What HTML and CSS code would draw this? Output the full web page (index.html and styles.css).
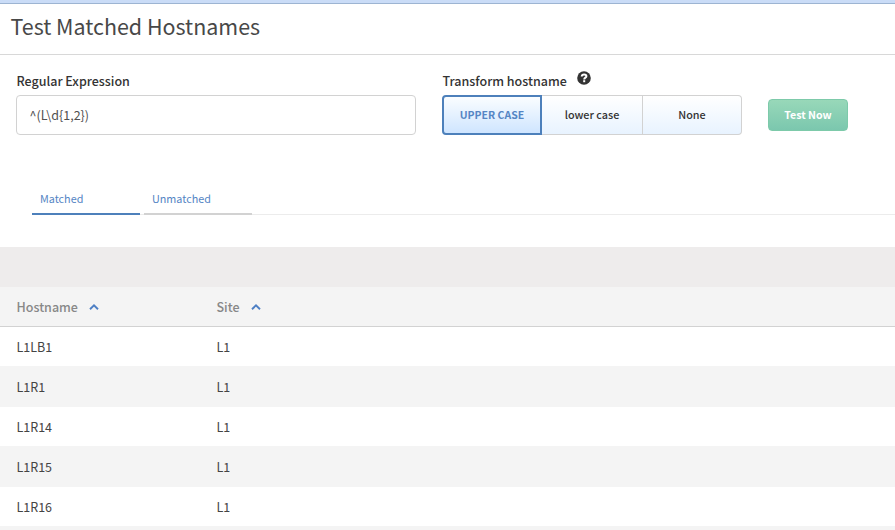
FILE: index.html
```html
<!DOCTYPE html>
<html lang="en">
<head>
<meta charset="utf-8">
<title>Test Matched Hostnames</title>
<link rel="stylesheet" href="styles.css">
</head>
<body>
<header class="title-bar"><h1>Test Matched Hostnames</h1></header>
<section class="form">
  <div class="field regex">
    <div class="label"><label for="regex">Regular Expression</label></div>
    <input id="regex" class="input" type="text" value="^(L\d{1,2})">
  </div>
  <div class="field transform">
    <div class="label"><span>Transform hostname</span>
      <svg class="help" viewBox="0 0 14 14"><circle cx="7" cy="7" r="6.8" fill="#333"/><path d="M4.7 5.5C4.8 4.1 5.7 3.4 7.1 3.4c1.3 0 2.3.7 2.3 1.8C9.4 6.7 7.2 6.6 7.2 8.4" fill="none" stroke="#fff" stroke-width="2"/><rect x="6.2" y="9.2" width="2" height="2" fill="#fff"/></svg>
    </div>
    <div class="segments">
      <button class="segment selected">UPPER CASE</button>
      <button class="segment">lower case</button>
      <button class="segment">None</button>
    </div>
  </div>
  <button class="test">Test Now</button>
</section>
<nav class="tabs">
  <a class="tab active">Matched</a>
  <a class="tab">Unmatched</a>
</nav>
<div class="toolbar"></div>
<div class="table">
  <div class="row head">
    <div class="cell"><span>Hostname</span><svg class="caret" viewBox="0 0 10 6"><path d="M1 5.2L5 1.4L9 5.2"/></svg></div>
    <div class="cell"><span>Site</span><svg class="caret" viewBox="0 0 10 6"><path d="M1 5.2L5 1.4L9 5.2"/></svg></div>
  </div>
  <div class="row"><div class="cell">L1LB1</div><div class="cell">L1</div></div>
  <div class="row shaded"><div class="cell">L1R1</div><div class="cell">L1</div></div>
  <div class="row"><div class="cell">L1R14</div><div class="cell">L1</div></div>
  <div class="row shaded"><div class="cell">L1R15</div><div class="cell">L1</div></div>
  <div class="row"><div class="cell">L1R16</div><div class="cell">L1</div></div>
  <div class="row shaded last"></div>
</div>
</body>
</html>
```

FILE: styles.css
```css
* { box-sizing: border-box; }
body {
  margin: 0;
  background: #fff;
  color: #444;
  font-family: "Noto Sans CJK SC", "Noto Sans", sans-serif;
  font-size: 12.5px;
}
button, input { font-family: inherit; margin: 0; }
.title-bar {
  height: 55px;
  border-top: 3px solid #cadcf7;
  border-bottom: 1px solid #d8d8d8;
  box-shadow: inset 0 1px #9db4d2;
  padding-left: 10.5px;
}
h1 { margin: 0; font-size: 21.45px; font-weight: 400; line-height: 46px; color: #484848; }
.form { display: flex; height: 105px; padding: 16px 0 0 16px; }
.label { display: flex; height: 24px; padding-left: 0.5px; line-height: 19px; font-weight: 500; color: #333; }
.regex { width: 400px; margin-right: 26px; }
.transform { width: 300px; margin-right: 26px; }
.input {
  display: block;
  width: 400px;
  height: 40px;
  padding: 0 12.5px 2px;
  border: 1px solid #d2d2d2;
  border-radius: 4px;
  background: #fff;
  color: #505050;
  font-size: 12.5px;
}
.help { width: 14px; height: 14px; margin-left: 10px; }
.segments { display: flex; height: 40px; }
.segment {
  width: 100px;
  padding: 0 0 2px;
  border: 1px solid #d2d2d2;
  border-left-width: 0;
  background: linear-gradient(#fff, #e8f3ff);
  color: #333;
  font-size: 10.8px;
  font-weight: 500;
}
.segment:nth-child(2) { width: 101px; }
.segment:last-child { width: 99px; border-radius: 0 4px 4px 0; }
.segment.selected {
  border: 2px solid #4d80bb;
  border-radius: 4px 0 0 4px;
  background: linear-gradient(#fafdff, #cfe5ff);
  color: #5585c4;
  font-size: 10.5px;
  font-weight: 700;
}
.test {
  width: 80px;
  height: 32px;
  margin-top: 28px;
  padding: 0 0 2px;
  border: 1px solid #7dcaaa;
  border-radius: 4px;
  background: linear-gradient(#98d8b9, #7bc7ae);
  color: #fff;
  font-size: 10.6px;
  font-weight: 700;
}
.tabs { display: flex; gap: 4px; height: 55px; margin: 0 0 32px 32px; box-shadow: inset 0 -1px #ececec; }
.tab {
  width: 108px;
  height: 55px;
  padding: 29px 8px 0;
  border-bottom: 2px solid #d2d2d2;
  color: #5585c4;
  font-size: 10.8px;
  line-height: 18px;
}
.tab.active { border-color: #4d80bb; }
.toolbar { height: 40px; background: #eeecec; }
.row { display: flex; height: 39px; padding-left: 16.5px; line-height: 41px; }
.row.shaded { height: 41px; background: #f4f4f4; line-height: 42px; }
.row.shaded.last { height: 4px; }
.row.head { height: 40px; border-bottom: 1px solid #d2d2d2; background: #f4f4f4; color: #888; font-weight: 500; line-height: 40px; }
.cell { display: flex; align-items: center; width: 200px; }
.caret { width: 10px; height: 6px; margin-left: 11px; fill: none; stroke: #4d7fc4; stroke-width: 1.9; }
```
